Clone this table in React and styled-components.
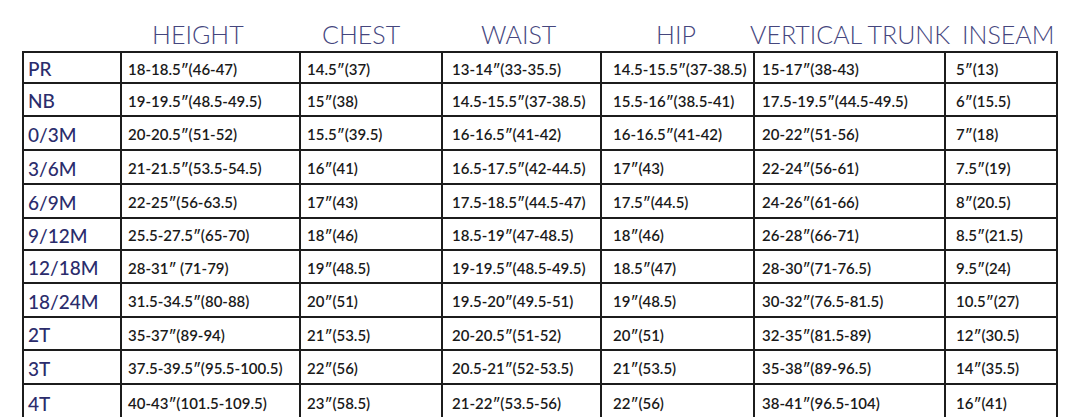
import React from "react";
import styled, { createGlobalStyle } from "styled-components";

const Global = createGlobalStyle`
  html, body { margin: 0; padding: 0; background: #ffffff; }
  body { overflow: hidden; font-family: "Lato", "Noto Sans", sans-serif; }
`;

const COLS = "96px 177px 140px 157px 151px 189px 110px";
const ROWS = "29px 31px 32px 32px 32px 30px 31px 32px 31px 32px 34px";

const Page = styled.div`
  width: 1085px;
  height: 417px;
  padding-left: 22px;
  box-sizing: border-box;
  overflow: hidden;
`;

const HeaderRow = styled.div`
  display: grid;
  grid-template-columns: ${COLS};
  column-gap: 2px;
  padding: 0 2px;
  height: 51px;
  align-items: end;
`;

const HeaderCell = styled.div`
  font-family: "Lato", sans-serif;
  font-weight: 300;
  font-size: 25px;
  line-height: 26px;
  color: #45467e;
  white-space: nowrap;
  padding-bottom: 4px;
  margin-left: ${(p) => p.$offset}px;
`;

const Table = styled.div`
  display: grid;
  grid-template-columns: ${COLS};
  grid-template-rows: ${ROWS};
  gap: 2px;
  padding: 2px;
  background: #1c1c1c;
  width: max-content;
`;

const Label = styled.div`
  background: #ffffff;
  display: flex;
  align-items: center;
  padding-left: 4px;
  padding-top: 2px;
  font-family: "Lato", sans-serif;
  font-weight: 500;
  font-size: 19px;
  color: #2b2c6c;
  white-space: nowrap;
`;

const Cell = styled.div`
  background: #ffffff;
  display: flex;
  align-items: center;
  padding-left: ${(p) => p.$pad}px;
  padding-top: 2px;
  font-family: "Lato", sans-serif;
  font-weight: 600;
  font-size: 15px;
  color: #1a1a1a;
  white-space: nowrap;
`;

const headers = [
  { t: "", o: 0 },
  { t: "HEIGHT", o: 30 },
  { t: "CHEST", o: 21 },
  { t: "WAIST", o: 38 },
  { t: "HIP", o: 54 },
  { t: "VERTICAL TRUNK", o: -5 },
  { t: "INSEAM", o: 16 },
];

const pads = [4, 6, 6, 9, 11, 7, 10];

const data = [
  ["PR", "18-18.5″(46-47)", "14.5″(37)", "13-14″(33-35.5)", "14.5-15.5″(37-38.5)", "15-17″(38-43)", "5″(13)"],
  ["NB", "19-19.5″(48.5-49.5)", "15″(38)", "14.5-15.5″(37-38.5)", "15.5-16″(38.5-41)", "17.5-19.5″(44.5-49.5)", "6″(15.5)"],
  ["0/3M", "20-20.5″(51-52)", "15.5″(39.5)", "16-16.5″(41-42)", "16-16.5″(41-42)", "20-22″(51-56)", "7″(18)"],
  ["3/6M", "21-21.5″(53.5-54.5)", "16″(41)", "16.5-17.5″(42-44.5)", "17″(43)", "22-24″(56-61)", "7.5″(19)"],
  ["6/9M", "22-25″(56-63.5)", "17″(43)", "17.5-18.5″(44.5-47)", "17.5″(44.5)", "24-26″(61-66)", "8″(20.5)"],
  ["9/12M", "25.5-27.5″(65-70)", "18″(46)", "18.5-19″(47-48.5)", "18″(46)", "26-28″(66-71)", "8.5″(21.5)"],
  ["12/18M", "28-31″ (71-79)", "19″(48.5)", "19-19.5″(48.5-49.5)", "18.5″(47)", "28-30″(71-76.5)", "9.5″(24)"],
  ["18/24M", "31.5-34.5″(80-88)", "20″(51)", "19.5-20″(49.5-51)", "19″(48.5)", "30-32″(76.5-81.5)", "10.5″(27)"],
  ["2T", "35-37″(89-94)", "21″(53.5)", "20-20.5″(51-52)", "20″(51)", "32-35″(81.5-89)", "12″(30.5)"],
  ["3T", "37.5-39.5″(95.5-100.5)", "22″(56)", "20.5-21″(52-53.5)", "21″(53.5)", "35-38″(89-96.5)", "14″(35.5)"],
  ["4T", "40-43″(101.5-109.5)", "23″(58.5)", "21-22″(53.5-56)", "22″(56)", "38-41″(96.5-104)", "16″(41)"],
];

export default function App() {
  return (
    <>
      <Global />
      <Page>
        <HeaderRow>
          {headers.map((h, i) => (
            <HeaderCell key={i} $offset={h.o}>
              {h.t}
            </HeaderCell>
          ))}
        </HeaderRow>
        <Table>
          {data.map((row) =>
            row.map((v, j) =>
              j === 0 ? (
                <Label key={row[0] + j}>{v}</Label>
              ) : (
                <Cell key={row[0] + j} $pad={pads[j]}>
                  {v}
                </Cell>
              )
            )
          )}
        </Table>
      </Page>
    </>
  );
}
